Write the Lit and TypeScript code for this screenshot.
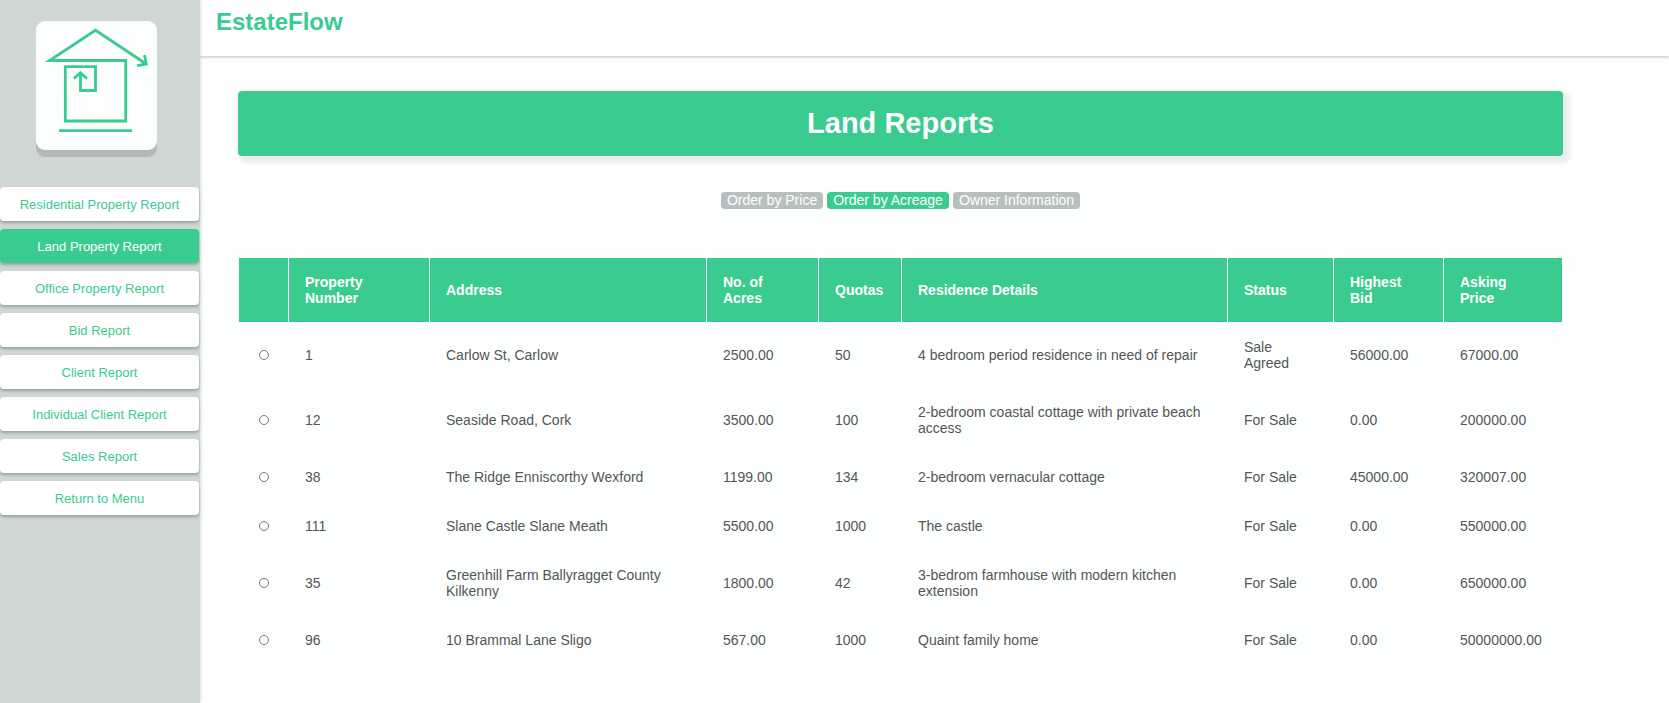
import { LitElement, html, css } from "lit";
import { customElement, state } from "lit/decorators.js";
import { classMap } from "lit/directives/class-map.js";

interface Land {
  id: string;
  address: string;
  acres: string;
  quotas: string;
  residence: string;
  status: string;
  bid: string;
  price: string;
}

const REPORTS = [
  "Residential Property Report",
  "Land Property Report",
  "Office Property Report",
  "Bid Report",
  "Client Report",
  "Individual Client Report",
  "Sales Report",
  "Return to Menu",
];

const ACTIONS = ["Order by Price", "Order by Acreage", "Owner Information"];

const HEADINGS = [
  "Property\nNumber",
  "Address",
  "No. of\nAcres",
  "Quotas",
  "Residence Details",
  "Status",
  "Highest\nBid",
  "Asking\nPrice",
];

const LANDS: Land[] = [
  { id: "1", address: "Carlow St, Carlow", acres: "2500.00", quotas: "50", residence: "4 bedroom period residence in need of repair", status: "Sale Agreed", bid: "56000.00", price: "67000.00" },
  { id: "12", address: "Seaside Road, Cork", acres: "3500.00", quotas: "100", residence: "2-bedroom coastal cottage with private beach access", status: "For Sale", bid: "0.00", price: "200000.00" },
  { id: "38", address: "The Ridge Enniscorthy Wexford", acres: "1199.00", quotas: "134", residence: "2-bedroom vernacular cottage", status: "For Sale", bid: "45000.00", price: "320007.00" },
  { id: "111", address: "Slane Castle Slane Meath", acres: "5500.00", quotas: "1000", residence: "The castle", status: "For Sale", bid: "0.00", price: "550000.00" },
  { id: "35", address: "Greenhill Farm Ballyragget County Kilkenny", acres: "1800.00", quotas: "42", residence: "3-bedrom farmhouse with modern kitchen extension", status: "For Sale", bid: "0.00", price: "650000.00" },
  { id: "96", address: "10 Brammal Lane Sligo", acres: "567.00", quotas: "1000", residence: "Quaint family home", status: "For Sale", bid: "0.00", price: "50000000.00" },
];

@customElement("report-sidebar")
export class ReportSidebar extends LitElement {
  @state() private current = "Land Property Report";

  static styles = css`
    :host {
      display: block;
      background: #ced7d4;
      box-shadow: 0 0 4px rgba(0, 0, 0, 0.2);
    }
    .logo {
      display: block;
      width: 121px;
      margin: 21px 0 37px 36px;
      background: #fdfffe;
      border-radius: 9px;
      box-shadow: 0 7px 0 #b7b7b7;
    }
    .logo svg {
      display: block;
      width: 100%;
    }
    .menu {
      display: flex;
      flex-direction: column;
      gap: 8px;
      padding-right: 1px;
    }
    .item {
      height: 34px;
      padding: 0;
      border: 0;
      border-radius: 4px;
      background: #fff;
      color: #3acb8f;
      font: 500 13px "Liberation Sans", Arial, sans-serif;
      box-shadow: 0 2px 3px rgba(0, 0, 0, 0.25);
      cursor: pointer;
    }
    .item.active {
      background: #3acb8f;
      color: #fff;
    }
  `;

  render() {
    return html`
      <div class="logo">
        <svg viewBox="36 21 121 129" fill="none" stroke="#3acb8f" stroke-width="2.8" role="img" aria-label="EstateFlow">
          <path d="M145.5 63.5 95.5 30.3 49.5 60.5H125.7V121H65.3V66.7H95.5V90.5H80.5V72.5" />
          <path d="M144.5 55 146.3 64 137 65.6" />
          <path d="M73.8 78.8 80.4 72.6 87 78.8" />
          <path d="M59 130.7H132" />
        </svg>
      </div>
      <nav class="menu">
        ${REPORTS.map(
          (name) => html`<button
            class=${classMap({ item: true, active: name === this.current })}
            @click=${() => (this.current = name)}
          >${name}</button>`
        )}
      </nav>
    `;
  }
}

@customElement("land-table")
export class LandTable extends LitElement {
  static styles = css`
    :host {
      display: block;
    }
    .table {
      width: 100%;
      table-layout: fixed;
      border-collapse: separate;
      border-spacing: 1px;
      font-size: 14px;
      line-height: 16px;
      text-align: left;
      color: #555;
    }
    .select { width: 49px; }
    .number { width: 140px; }
    .address { width: 276px; }
    .acres { width: 111px; }
    .quotas { width: 82px; }
    .residence { width: 325px; }
    .status { width: 105px; }
    .bid { width: 109px; }
    .price { width: 118px; }
    .head, .blank, .cell {
      box-sizing: border-box;
      padding: 16px;
    }
    .head, .blank {
      background: #3acb8f;
      color: #fff;
    }
    .head {
      white-space: pre-line;
    }
    .pick {
      padding: 0;
      text-align: center;
    }
    .radio {
      appearance: none;
      display: block;
      width: 10px;
      height: 10px;
      margin: 0 auto;
      border: 1px solid #767676;
      border-radius: 50%;
      background: #fff;
    }
    .radio:checked {
      background: #3acb8f;
    }
  `;

  render() {
    return html`
      <table class="table">
        <colgroup>
          <col class="select" /><col class="number" /><col class="address" />
          <col class="acres" /><col class="quotas" /><col class="residence" />
          <col class="status" /><col class="bid" /><col class="price" />
        </colgroup>
        <thead>
          <tr>
            <td class="blank"></td>
            ${HEADINGS.map((h) => html`<th class="head" scope="col">${h}</th>`)}
          </tr>
        </thead>
        <tbody>
          ${LANDS.map(
            (l) => html`<tr>
              <td class="pick"><input class="radio" type="radio" name="land" value=${l.id} aria-label="Property ${l.id}" /></td>
              <td class="cell">${l.id}</td>
              <td class="cell">${l.address}</td>
              <td class="cell">${l.acres}</td>
              <td class="cell">${l.quotas}</td>
              <td class="cell">${l.residence}</td>
              <td class="cell">${l.status}</td>
              <td class="cell">${l.bid}</td>
              <td class="cell">${l.price}</td>
            </tr>`
          )}
        </tbody>
      </table>
    `;
  }
}

@customElement("app-root")
export class AppRoot extends LitElement {
  @state() private action = "Order by Acreage";

  static styles = css`
    :host {
      display: grid;
      grid-template-columns: 200px minmax(0, 1fr);
      min-height: 100vh;
      background: #fdfffe;
      font-family: "Liberation Sans", Arial, sans-serif;
    }
    .sidebar {
      z-index: 1;
    }
    .header {
      box-sizing: border-box;
      height: 56px;
      padding: 8px 16px;
      background: #fff;
      box-shadow: 0 1px 3px rgba(0, 0, 0, 0.25);
    }
    .brand {
      color: #3acb8f;
      font-size: 24px;
      font-weight: bold;
      line-height: 27px;
    }
    .main {
      padding: 35px 106px 24px 38px;
    }
    .banner {
      margin: 0;
      padding: 16px;
      border-radius: 4px;
      background: #3acb8f;
      color: #fff;
      font-size: 29px;
      line-height: 33px;
      text-align: center;
      box-shadow: 4px 4px 4px 3px rgba(0, 0, 0, 0.07);
    }
    .actions {
      display: flex;
      justify-content: center;
      gap: 4px;
      margin: 36px 0 48px;
    }
    .action {
      padding: 0 6px;
      border: 0;
      border-radius: 4px;
      background: #b7c0be;
      color: #fff;
      font: 14px/17px "Liberation Sans", Arial, sans-serif;
      cursor: pointer;
    }
    .action.active {
      background: #3acb8f;
    }
  `;

  render() {
    return html`
      <report-sidebar class="sidebar"></report-sidebar>
      <div>
        <header class="header"><div class="brand">EstateFlow</div></header>
        <main class="main">
          <h1 class="banner">Land Reports</h1>
          <div class="actions">
            ${ACTIONS.map(
              (name) => html`<button
                class=${classMap({ action: true, active: name === this.action })}
                @click=${() => (this.action = name)}
              >${name}</button>`
            )}
          </div>
          <land-table></land-table>
        </main>
      </div>
    `;
  }
}
